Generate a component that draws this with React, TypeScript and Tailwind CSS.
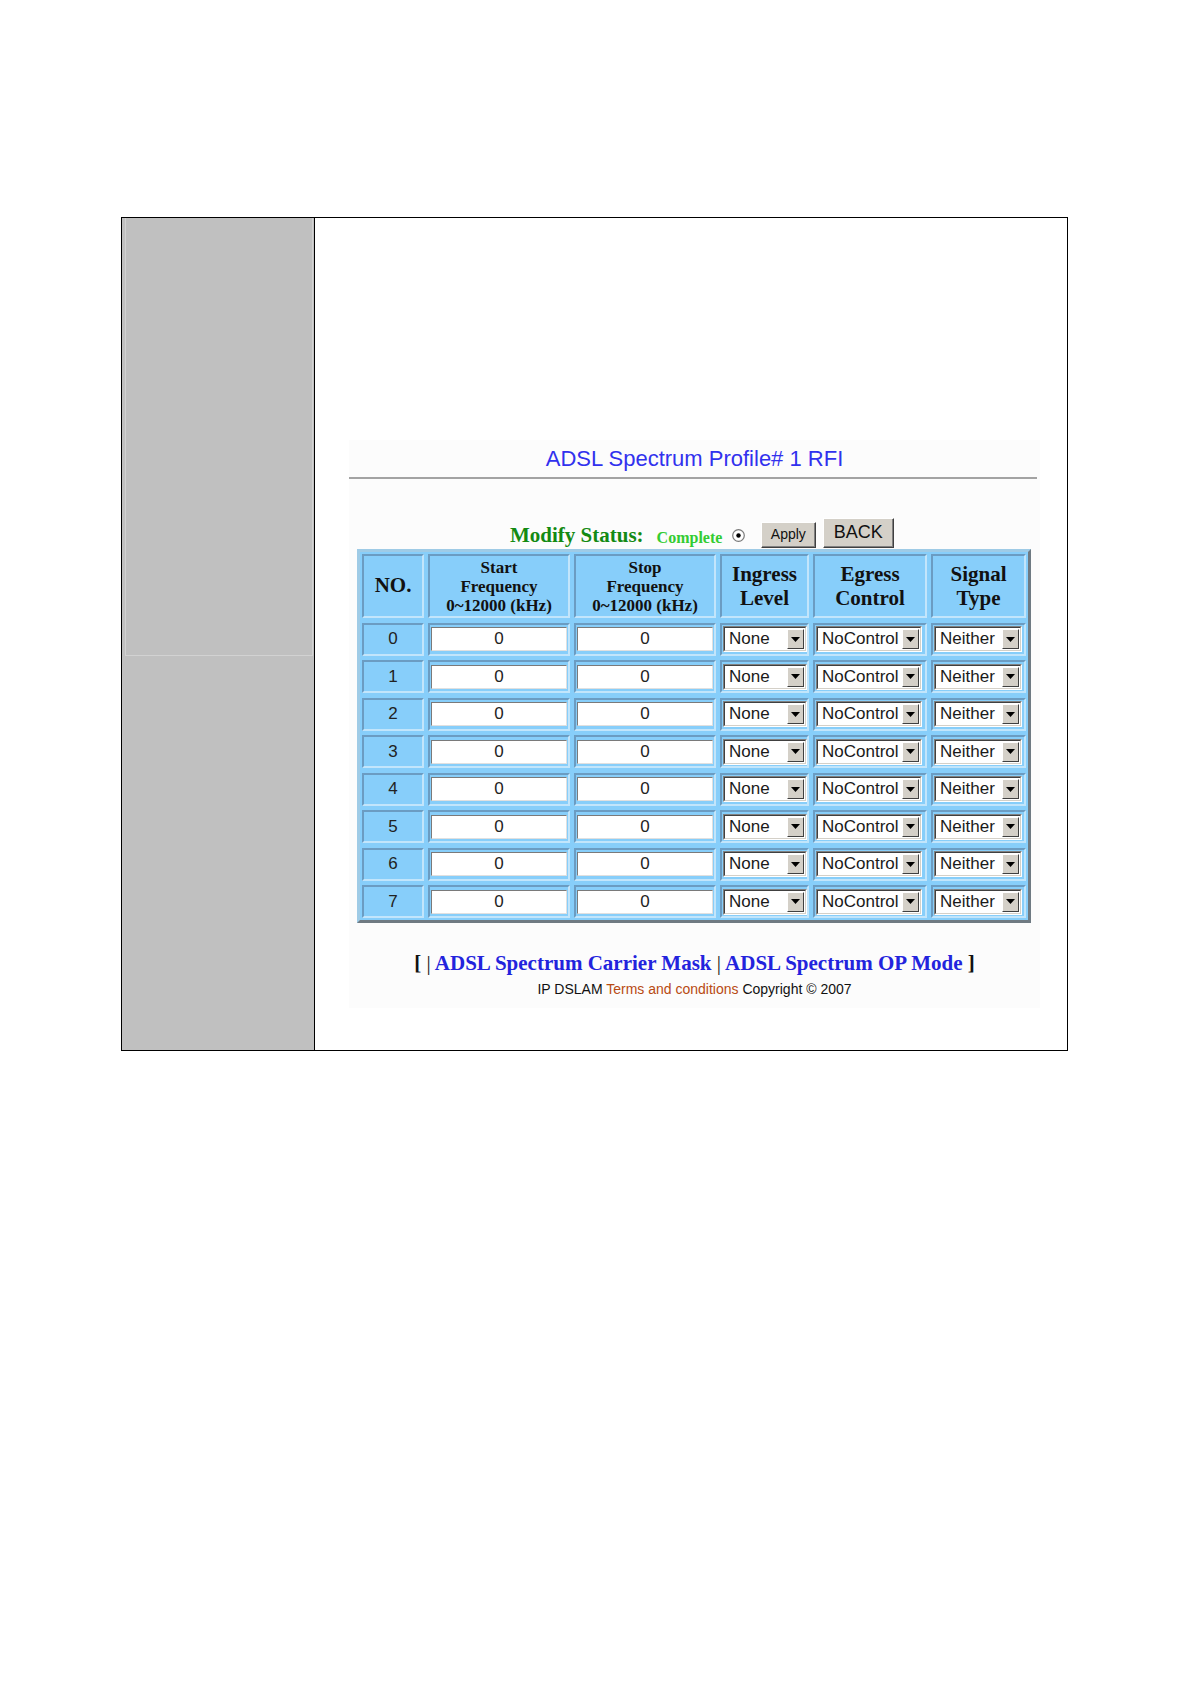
import React from "react";

const serif = { fontFamily: '"Liberation Serif", "Times New Roman", serif' };
const sans = { fontFamily: '"Liberation Sans", Arial, sans-serif' };

const rows = [0, 1, 2, 3, 4, 5, 6, 7];

const cell =
  "bg-[#87cefa] border-2 border-t-[#6b9cc2] border-l-[#6b9cc2] border-b-[#c2e5fb] border-r-[#c2e5fb]";

const Select = ({ value, width }: { value: string; width: string }) => (
  <div
    className={`${width} h-[26px] ml-[1px] border border-t-[#808080] border-l-[#808080] border-b-white border-r-white`}
  >
    <div className="h-full flex items-stretch bg-white border border-t-[#404040] border-l-[#404040] border-b-[#d4d0c8] border-r-[#d4d0c8]">
      <span className="flex-1 pl-[4px] text-[17px] leading-[22px] text-[#1a1a1a] whitespace-nowrap overflow-hidden" style={sans}>
        {value}
      </span>
      <div className="w-[17px] m-[1px] bg-[#d4d0c8] flex items-center justify-center border border-t-white border-l-white border-b-[#404040] border-r-[#404040]">
        <svg width="9" height="5" viewBox="0 0 9 5">
          <polygon points="0,0 9,0 4.5,5" fill="#000" />
        </svg>
      </div>
    </div>
  </div>
);

const Input = () => (
  <div className="mx-[1px] h-[24px] w-full bg-white border border-t-[#7a7a7a] border-l-[#7a7a7a] border-b-[#e0e0e0] border-r-[#e0e0e0] flex items-center justify-center">
    <span className="text-[17px] leading-[20px] text-[#222]" style={sans}>
      0
    </span>
  </div>
);

const Button = ({ label, className }: { label: string; className: string }) => (
  <div
    className={`${className} bg-[#d4d0c8] border border-t-white border-l-white border-b-[#404040] border-r-[#404040] flex`}
  >
    <div className="flex-1 flex items-center justify-center border-b border-r border-[#808080] text-[#111]" style={sans}>
      {label}
    </div>
  </div>
);

export default function App() {
  return (
    <div className="min-h-[1684px] w-[1190px] bg-white pt-[217px]">
      <div className="ml-[121px] w-[947px] h-[834px] border border-black flex">
        {/* left gray panel */}
        <div className="w-[193px] h-full bg-[#c0c0c0] border-r border-black">
          <div className="ml-[3px] w-[188px] h-[438px] border-l border-b border-r border-[#d2d2d2]" />
        </div>

        {/* main */}
        <div className="flex-1">
          <div className="ml-[34px] mt-[222px] w-[691px] bg-[#fcfcfc] pb-[10px]">
            <div className="pt-[7px] text-center text-[22px] leading-[24px] text-[#3131ee]" style={sans}>
              ADSL Spectrum Profile# 1 RFI
            </div>
            <div className="mt-[6px] w-[688px] h-[2px] bg-[#a3a3a3]" />

            {/* modify status row */}
            <div className="mt-[39px] h-[30px] ml-[161px] flex items-end">
              <span className="mb-[2px] text-[21px] leading-[21px] font-bold text-[#138a13]" style={serif}>
                Modify Status:
              </span>
              <span className="ml-[13px] mb-[2px] text-[16px] leading-[16px] font-bold text-[#33cc33]" style={serif}>
                Complete
              </span>
              <svg className="ml-[10px] mb-[6px]" width="13" height="13" viewBox="0 0 13 13">
                <circle cx="6.5" cy="6.5" r="5.8" fill="#fff" stroke="#7a7a7a" strokeWidth="1.2" />
                <circle cx="6.5" cy="6.5" r="2.2" fill="#000" />
              </svg>
              <Button label="Apply" className="ml-[16px] w-[55px] h-[26px] text-[14px]" />
              <Button label="BACK" className="ml-[7px] w-[71px] h-[30px] text-[18px]" />
            </div>

            {/* table */}
            <div className="mt-[1px] ml-[8px] w-[674px] bg-[#87cefa] border-[3px] border-t-[#9fcbe6] border-l-[#9fcbe6] border-b-[#6f7a82] border-r-[#6f7a82] p-[2px]">
              <div className="grid grid-cols-[62px_142px_142px_89px_114px_95px] gap-x-[4px] gap-y-[4.5px]">
                <div className={`${cell} h-[64px] flex items-center justify-center text-[21px] font-bold text-[#111]`} style={serif}>
                  NO.
                </div>
                <div className={`${cell} h-[64px] flex items-center justify-center text-center text-[17px] leading-[19px] font-bold text-[#111]`} style={serif}>
                  Start
                  <br />
                  Frequency
                  <br />
                  0~12000 (kHz)
                </div>
                <div className={`${cell} h-[64px] flex items-center justify-center text-center text-[17px] leading-[19px] font-bold text-[#111]`} style={serif}>
                  Stop
                  <br />
                  Frequency
                  <br />
                  0~12000 (kHz)
                </div>
                <div className={`${cell} h-[64px] flex items-center justify-center text-center text-[21px] leading-[24px] font-bold text-[#111]`} style={serif}>
                  Ingress
                  <br />
                  Level
                </div>
                <div className={`${cell} h-[64px] flex items-center justify-center text-center text-[21px] leading-[24px] font-bold text-[#111]`} style={serif}>
                  Egress
                  <br />
                  Control
                </div>
                <div className={`${cell} h-[64px] flex items-center justify-center text-center text-[21px] leading-[24px] font-bold text-[#111]`} style={serif}>
                  Signal
                  <br />
                  Type
                </div>

                {rows.map((n) => (
                  <React.Fragment key={n}>
                    <div className={`${cell} h-[33px] flex items-center justify-center text-[17px] text-[#222]`} style={sans}>
                      {n}
                    </div>
                    <div className={`${cell} h-[33px] flex items-center`}>
                      <Input />
                    </div>
                    <div className={`${cell} h-[33px] flex items-center`}>
                      <Input />
                    </div>
                    <div className={`${cell} h-[33px] flex items-center`}>
                      <Select value="None" width="w-[84px]" />
                    </div>
                    <div className={`${cell} h-[33px] flex items-center`}>
                      <Select value="NoControl" width="w-[106px]" />
                    </div>
                    <div className={`${cell} h-[33px] flex items-center`}>
                      <Select value="Neither" width="w-[88px]" />
                    </div>
                  </React.Fragment>
                ))}
              </div>
            </div>

            {/* footer */}
            <div className="mt-[28px] text-center text-[21px] leading-[24px] font-bold text-[#111]" style={serif}>
              [ <span className="font-normal">|</span>{" "}
              <a className="text-[#2323dd]">ADSL Spectrum Carrier Mask</a>{" "}
              <span className="font-normal">|</span>{" "}
              <a className="text-[#2323dd]">ADSL Spectrum OP Mode</a> ]
            </div>
            <div className="mt-[5px] text-center text-[14px] leading-[18px] text-[#111]" style={sans}>
              IP DSLAM <span className="text-[#b84a12]">Terms and conditions</span> Copyright © 2007
            </div>
          </div>
        </div>
      </div>
    </div>
  );
}
